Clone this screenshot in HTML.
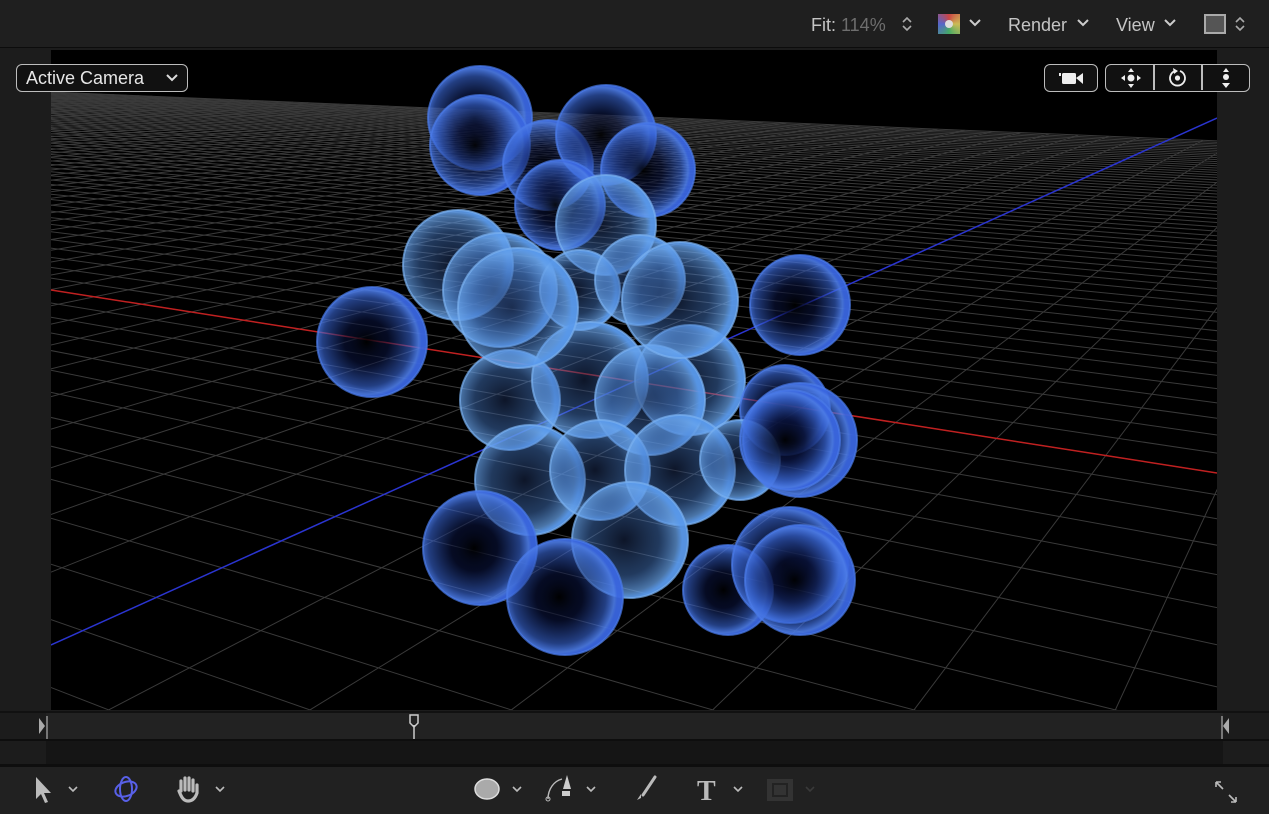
<!DOCTYPE html>
<html><head><meta charset="utf-8"><style>
*{margin:0;padding:0;box-sizing:border-box}
html,body{width:1269px;height:814px;overflow:hidden}
body{background:#1c1c1c;position:relative;font-family:"Liberation Sans",sans-serif;color:#c8c8c8}
.abs{position:absolute}
svg{overflow:hidden}
.top{left:0;top:0;width:1269px;height:48px;background:#1f1f1f;border-bottom:1px solid #0c0c0c}
.t{position:absolute;top:15px;font-size:18px;color:#c4c4c4}
.btn{position:absolute;border:1.5px solid #bdbdbd;border-radius:6px;height:28px}
</style></head><body>
<div class="abs top">
 <div class="t" style="left:811px">Fit: <span style="color:#6e6e6e">114%</span></div>
 <svg class="abs" style="left:900px;top:14px" width="14" height="20"><path d="M3 8l4-4 4 4M3 12l4 4 4-4" stroke="#aaa" stroke-width="1.6" fill="none"/></svg>
 <div class="abs" style="left:938px;top:14px;width:22px;height:20px;background:conic-gradient(#c44 0,#cb5 90deg,#4a6 180deg,#56c 270deg,#c44 360deg)"><div style="position:absolute;left:7px;top:6px;width:8px;height:8px;border-radius:50%;background:#ddd"></div></div>
 <svg class="abs" style="left:968px;top:18px" width="14" height="10"><path d="M2 2l5 5 5-5" stroke="#ccc" stroke-width="2" fill="none"/></svg>
 <div class="t" style="left:1008px">Render</div>
 <svg class="abs" style="left:1076px;top:18px" width="14" height="10"><path d="M2 2l5 5 5-5" stroke="#ccc" stroke-width="2" fill="none"/></svg>
 <div class="t" style="left:1116px">View</div>
 <svg class="abs" style="left:1163px;top:18px" width="14" height="10"><path d="M2 2l5 5 5-5" stroke="#ccc" stroke-width="2" fill="none"/></svg>
 <div class="abs" style="left:1204px;top:14px;width:22px;height:20px;border:2px solid #aaa;background:#555"></div>
 <svg class="abs" style="left:1233px;top:14px" width="14" height="20"><path d="M3 8l4-4 4 4M3 12l4 4 4-4" stroke="#aaa" stroke-width="1.6" fill="none"/></svg>
</div>
<svg id="scene" class="abs" style="left:51px;top:50px;background:#000" width="1166" height="660"></svg>
<div class="btn" style="left:16px;top:64px;width:172px;background:#111;font-size:18px;color:#e6e6e6;padding:3px 0 0 9px">Active Camera
 <svg class="abs" style="left:148px;top:8px" width="14" height="10"><path d="M2 2l5 5 5-5" stroke="#ddd" stroke-width="2" fill="none"/></svg></div>
<div class="btn" style="left:1044px;top:64px;width:54px;background:#111">
 <svg class="abs" style="left:14px;top:6px" width="26" height="14"><rect x="3" y="2" width="14" height="11" rx="1.5" fill="#eee"/><path d="M17 7l7-5v11z" fill="#eee"/><rect x="0" y="2" width="2" height="3" fill="#eee"/></svg></div>
<div class="btn" style="left:1105px;top:64px;width:145px;background:#111">
 <div class="abs" style="left:47px;top:0;width:1.5px;height:25px;background:#bdbdbd"></div>
 <div class="abs" style="left:95px;top:0;width:1.5px;height:25px;background:#bdbdbd"></div>
 <svg class="abs" style="left:12px;top:1px" width="26" height="24"><circle cx="13" cy="12" r="3.5" fill="#eee"/><path d="M13 2l-3 4h6zM13 22l-3-4h6zM3 12l4-3v6zM23 12l-4-3v6z" fill="#eee"/></svg>
 <svg class="abs" style="left:59px;top:1px" width="26" height="24"><path d="M10 5a7.5 7.5 0 1 0 5 0" stroke="#eee" stroke-width="1.8" fill="none"/><path d="M8 2l5 3-4 3z" fill="#eee"/><circle cx="12.5" cy="12" r="2.6" fill="#eee"/></svg>
 <svg class="abs" style="left:107px;top:1px" width="26" height="24"><circle cx="13" cy="11" r="3" fill="#eee"/><path d="M13 2l-3 4h6zM13 22l-4-5h8z" fill="#eee"/></svg>
</div>
<div class="abs" style="left:0;top:711px;width:1269px;height:2px;background:#111"></div>
<div class="abs" style="left:46px;top:713px;width:1177px;height:26px;background:#222"></div>
<div class="abs" style="left:0;top:739px;width:1269px;height:2px;background:#0e0e0e"></div>
<div class="abs" style="left:46px;top:741px;width:1177px;height:23px;background:#151515"></div>
<div class="abs" style="left:0;top:764px;width:1269px;height:3px;background:#0e0e0e"></div>
<div class="abs" style="left:0;top:767px;width:1269px;height:47px;background:#212121"></div>
<svg class="abs" style="left:0;top:713px" width="1269" height="27">
 <path d="M39 5l6 8-6 8z" fill="#aaa"/><line x1="47" y1="3" x2="47" y2="26" stroke="#ccc"/>
 <path d="M1229 5l-6 8 6 8z" fill="#aaa"/><line x1="1222" y1="3" x2="1222" y2="26" stroke="#ccc"/>
 <path d="M410 2h8v8l-4 4-4-4z" fill="none" stroke="#ccc" stroke-width="1.5"/><line x1="414" y1="12" x2="414" y2="26" stroke="#ccc" stroke-width="1.5"/>
</svg>
<svg class="abs" style="left:0;top:767px" width="1269" height="47">
 <path d="M36 10l0 22 5-5 4 9 3-1-4-9 7 0z" fill="#bbb"/>
 <path d="M69 20l4 4 4-4" stroke="#bbb" stroke-width="1.6" fill="none"/>
 <ellipse cx="126" cy="22" rx="6" ry="12" fill="none" stroke="#5860e8" stroke-width="2"/><ellipse cx="126" cy="22" rx="11" ry="7" fill="none" stroke="#5860e8" stroke-width="2" transform="rotate(-20 126 22)"/>
 <path d="M181 14v10M185 11v12M189 11v12M193 13v11M197 18v8c-2 6-5 8-9 8-5 0-7-5-9-10" stroke="#bbb" stroke-width="3.2" fill="none" stroke-linecap="round"/>
 <path d="M216 20l4 4 4-4" stroke="#bbb" stroke-width="1.6" fill="none"/>
 <ellipse cx="487" cy="22" rx="12" ry="10" fill="#aaa" stroke="#ddd" stroke-width="1.5"/>
 <path d="M513 20l4 4 4-4" stroke="#bbb" stroke-width="1.6" fill="none"/>
 <path d="M548 32c0-10 6-18 14-20" stroke="#bbb" stroke-width="1.4" fill="none"/><circle cx="548" cy="32" r="2" fill="none" stroke="#bbb"/><path d="M567 8l-4 14h8z" fill="#ccc"/><rect x="562" y="24" width="8" height="5" fill="#ccc"/>
 <path d="M587 20l4 4 4-4" stroke="#bbb" stroke-width="1.6" fill="none"/>
 <path d="M655 10l-12 18" stroke="#bbb" stroke-width="3" stroke-linecap="round"/><path d="M641 27l-4 6 4-2z" fill="#bbb"/>
 <text x="697" y="33" font-family="Liberation Serif,serif" font-size="28" font-weight="bold" fill="#bbb">T</text>
 <path d="M734 20l4 4 4-4" stroke="#bbb" stroke-width="1.6" fill="none"/>
 <rect x="767" y="12" width="26" height="22" fill="#333"/><rect x="773" y="17" width="14" height="12" fill="none" stroke="#222" stroke-width="2"/>
 <path d="M806 20l4 4 4-4" stroke="#3a3a3a" stroke-width="1.6" fill="none"/>
 <path d="M1216 15l7 7M1216 15v5M1216 15h5M1236 35l-7-7M1236 35v-5M1236 35h-5" stroke="#bbb" stroke-width="1.6" fill="none"/>
</svg>
<script>
var NS="http://www.w3.org/2000/svg",svg=document.getElementById('scene');
function el(n,a,p){var e=document.createElementNS(NS,n);for(var k in a)e.setAttribute(k,a[k]);(p||svg).appendChild(e);return e}
var defs=el('defs',{});
var g=el('radialGradient',{id:'b',cx:'0.45',cy:'0.5',r:'0.5'},defs);
[['0','#000','0.9'],['0.4','#0a1440','0.55'],['0.8','#3a68d8','0.6'],['0.95','#4d7de8','0.9'],['1','#3a66e0','0.95']].forEach(function(s){el('stop',{offset:s[0],'stop-color':s[1],'stop-opacity':s[2]},g)});
var g2=el('radialGradient',{id:'l',cx:'0.45',cy:'0.5',r:'0.5'},defs);
[['0','#1a2a50','0.5'],['0.6','#4a80d0','0.45'],['0.9','#6aa6ee','0.7'],['1','#5a9aec','0.95']].forEach(function(s){el('stop',{offset:s[0],'stop-color':s[1],'stop-opacity':s[2]},g2)});
var ox=-51,oy=-50;
var O=[634+ox,381.5+oy],R=[-1669+ox,20+oy],B=[1434+ox,20+oy],s=0.034;
function P(u,v){var d=s*u+s*v+1;return[(s*u*R[0]+s*v*B[0]+O[0])/d,(s*u*R[1]+s*v*B[1]+O[1])/d]}
var KMIN=-29,KMAX=60;
for(var k=KMIN;k<=KMAX;k++){
 var lo=Math.max(KMIN,(0.03-1-s*k)/s);
 if(lo>=KMAX)continue;
 var a=P(k,lo),b=P(k,KMAX);el('line',{x1:a[0],y1:a[1],x2:b[0],y2:b[1],stroke:'#3a3a3a','stroke-width':1});
 a=P(lo,k);b=P(KMAX,k);el('line',{x1:a[0],y1:a[1],x2:b[0],y2:b[1],stroke:'#3a3a3a','stroke-width':1});
}
el('line',{x1:0,y1:240,x2:1166,y2:423,stroke:'#c02020','stroke-width':1.5});
el('line',{x1:0,y1:595,x2:1166,y2:68,stroke:'#2a34d0','stroke-width':1.5});
var bs=[[480,118,52,0],[480,145,50,0],[548,165,45,0],[606,135,50,0],[648,170,47,0],[560,205,45,0],[606,225,50,1],[458,265,55,1],[500,290,57,1],[580,290,40,1],[640,280,45,1],[372,342,55,0],[800,305,50,0],[510,400,50,1],[590,380,58,1],[690,380,55,1],[650,400,55,1],[785,410,45,0],[530,480,55,1],[600,470,50,1],[680,470,55,1],[740,460,40,1],[518,308,60,1],[680,300,58,1],[800,440,57,0],[790,440,50,0],[480,548,57,0],[630,540,58,1],[728,590,45,0],[565,597,58,0],[790,565,58,0],[800,580,55,0]];
bs.forEach(function(b){el('circle',{cx:b[0]+ox,cy:b[1]+oy,r:b[2],fill:b[3]?'url(#l)':'url(#b)',stroke:b[3]?'#7ab0f0':'#4a7ae8','stroke-width':2,'stroke-opacity':0.7})});
</script>
</body></html>
